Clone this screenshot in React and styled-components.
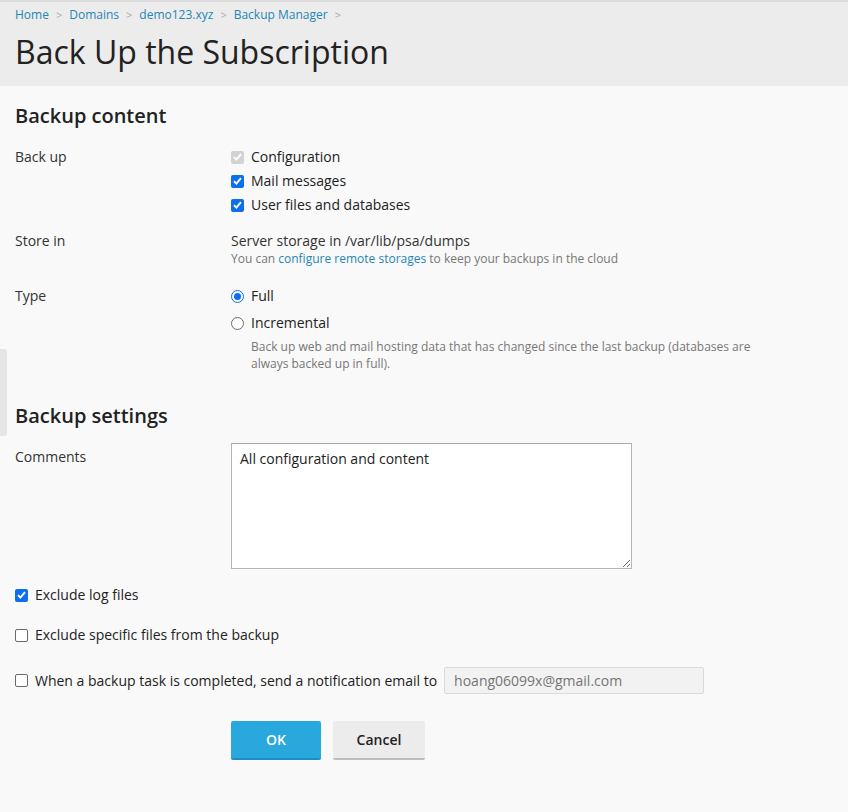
import React from 'react';
import styled, {createGlobalStyle} from 'styled-components';

const Global = createGlobalStyle`
  body {
    margin: 0;
    background: #f9f9f9;
    font-family: 'Open Sans', 'Liberation Sans', sans-serif;
    font-size: 14px;
    color: #222;
  }
`;

const Page = styled.div`
  position: relative;
  min-height: 812px;
`;

const Header = styled.div`
  background: #ececec;
  border-top: 2px solid #dcdcdc;
  padding: 4px 15px 14px;
`;

const Crumbs = styled.div`
  display: flex;
  align-items: center;
  gap: 6px;
  font-size: 12px;
  line-height: 18px;
`;

const Crumb = styled.a`
  color: #1f86b5;
  text-decoration: none;
`;

const Sep = styled.span`
  color: #aaa;
  font-size: 11px;
  margin: 0 1px;
`;

const Title = styled.h1`
  margin: 8px 0 0;
  font-size: 32px;
  font-weight: 400;
  line-height: 40px;
  color: #222;
`;

const Body = styled.div`
  padding: 16px 15px 40px;
`;

const SectionTitle = styled.h2`
  margin: 0 0 ${p => p.mb}px;
  font-size: 20px;
  font-weight: 600;
  line-height: 28px;
  color: #222;
`;

const Row = styled.div`
  display: grid;
  grid-template-columns: 216px 1fr;
  margin-bottom: ${p => p.gap || 0}px;
`;

const Label = styled.div`
  line-height: 24px;
  color: #333;
`;

const Field = styled.div`
  display: flex;
  flex-direction: column;
`;

const Option = styled.label`
  display: flex;
  align-items: center;
  gap: 7px;
  line-height: 24px;
  color: #222;
`;

const Check = styled.span`
  box-sizing: border-box;
  width: 13px;
  height: 13px;
  border-radius: 2px;
  flex: none;
  display: inline-flex;
  align-items: center;
  justify-content: center;
  background: ${p => (p.disabled ? '#d3d3d3' : p.on ? '#0b6ff0' : '#fff')};
  border: ${p => (p.on ? 'none' : '1px solid #6a6a6a')};
`;

const Radio = styled.span`
  box-sizing: border-box;
  width: 13px;
  height: 13px;
  border-radius: 50%;
  flex: none;
  background: #fff;
  border: ${p => (p.on ? '1px solid #0b6ff0' : '1px solid #6a6a6a')};
  display: inline-flex;
  align-items: center;
  justify-content: center;
  &::after {
    content: '';
    display: ${p => (p.on ? 'block' : 'none')};
    width: 7px;
    height: 7px;
    border-radius: 50%;
    background: #0b6ff0;
  }
`;

const Hint = styled.div`
  font-size: 12px;
  line-height: 17px;
  color: #777;
  padding-left: ${p => p.indent || 0}px;
  margin-top: ${p => p.mt || 0}px;
  max-width: 530px;
`;

const Link = styled.a`
  color: #1f86b5;
  text-decoration: none;
`;

const Plain = styled.div`
  line-height: 24px;
  color: #333;
`;

const TextArea = styled.textarea`
  box-sizing: border-box;
  width: 401px;
  height: 126px;
  border: 1px solid #b5b5b5;
  border-top-color: #a8a8a8;
  background: #fff;
  padding: 5px 8px;
  font-family: inherit;
  font-size: 14px;
  line-height: 20px;
  color: #222;
`;

const Line = styled.div`
  display: flex;
  align-items: center;
  gap: 6px;
  margin-bottom: ${p => p.gap || 0}px;
`;

const EmailInput = styled.input`
  box-sizing: border-box;
  width: 260px;
  height: 27px;
  margin-left: 1px;
  border: 1px solid #dadada;
  background: #f2f2f2;
  padding: 2px 9px;
  font-family: inherit;
  font-size: 14px;
  color: #999;
  border-radius: 2px;
`;

const Buttons = styled.div`
  display: flex;
  gap: 12px;
  padding-left: 216px;
  margin-top: 27px;
`;

const Button = styled.button`
  box-sizing: border-box;
  height: 39px;
  width: ${p => p.w}px;
  border: none;
  border-radius: 2px;
  border-bottom: 2px solid ${p => (p.primary ? '#1c8fc0' : '#bdbdbd')};
  background: ${p => (p.primary ? '#28a8dc' : '#ececec')};
  color: ${p => (p.primary ? '#fff' : '#222')};
  font-family: inherit;
  font-size: 14px;
  font-weight: 600;
  cursor: pointer;
`;

const SideTab = styled.div`
  position: absolute;
  left: 0;
  top: 349px;
  width: 7px;
  height: 87px;
  background: #e6e6e6;
  border-radius: 0 3px 3px 0;
`;

const Tick = () => (
  <svg width="9" height="8" viewBox="0 0 9 8">
    <path d="M1 4.2 L3.4 6.6 L8 1.2" fill="none" stroke="#fff" strokeWidth="1.9" />
  </svg>
);

const Box = ({on, disabled}) => (
  <Check on={on} disabled={disabled}>{on && <Tick />}</Check>
);

export default function App() {
  return (
    <Page>
      <Global />
      <Header>
        <Crumbs>
          <Crumb>Home</Crumb><Sep>&gt;</Sep>
          <Crumb>Domains</Crumb><Sep>&gt;</Sep>
          <Crumb>demo123.xyz</Crumb><Sep>&gt;</Sep>
          <Crumb>Backup Manager</Crumb><Sep>&gt;</Sep>
        </Crumbs>
        <Title>Back Up the Subscription</Title>
      </Header>

      <SideTab />

      <Body>
        <SectionTitle mb={15}>Backup content</SectionTitle>

        <Row gap={12}>
          <Label>Back up</Label>
          <Field>
            <Option><Box on disabled />Configuration</Option>
            <Option><Box on />Mail messages</Option>
            <Option><Box on />User files and databases</Option>
          </Field>
        </Row>

        <Row gap={17}>
          <Label>Store in</Label>
          <Field>
            <Plain>Server storage in /var/lib/psa/dumps</Plain>
            <Hint mt={-3}>
              You can <Link>configure remote storages</Link> to keep your backups in the cloud
            </Hint>
          </Field>
        </Row>

        <Row gap={30}>
          <Label>Type</Label>
          <Field>
            <Option><Radio on />Full</Option>
            <Option style={{marginTop: 3}}><Radio />Incremental</Option>
            <Hint indent={20} mt={3}>
              Back up web and mail hosting data that has changed since the last backup (databases are always backed up in full).
            </Hint>
          </Field>
        </Row>

        <SectionTitle mb={13}>Backup settings</SectionTitle>

        <Row gap={14}>
          <Label style={{marginTop: 2}}>Comments</Label>
          <Field>
            <TextArea defaultValue="All configuration and content" />
          </Field>
        </Row>

        <Line gap={16}>
          <Option><Box on />Exclude log files</Option>
        </Line>
        <Line gap={20}>
          <Option><Box />Exclude specific files from the backup</Option>
        </Line>
        <Line>
          <Option><Box />When a backup task is completed, send a notification email to</Option>
          <EmailInput placeholder="hoang06099x@gmail.com" />
        </Line>

        <Buttons>
          <Button primary w={90}>OK</Button>
          <Button w={92}>Cancel</Button>
        </Buttons>
      </Body>
    </Page>
  );
}
